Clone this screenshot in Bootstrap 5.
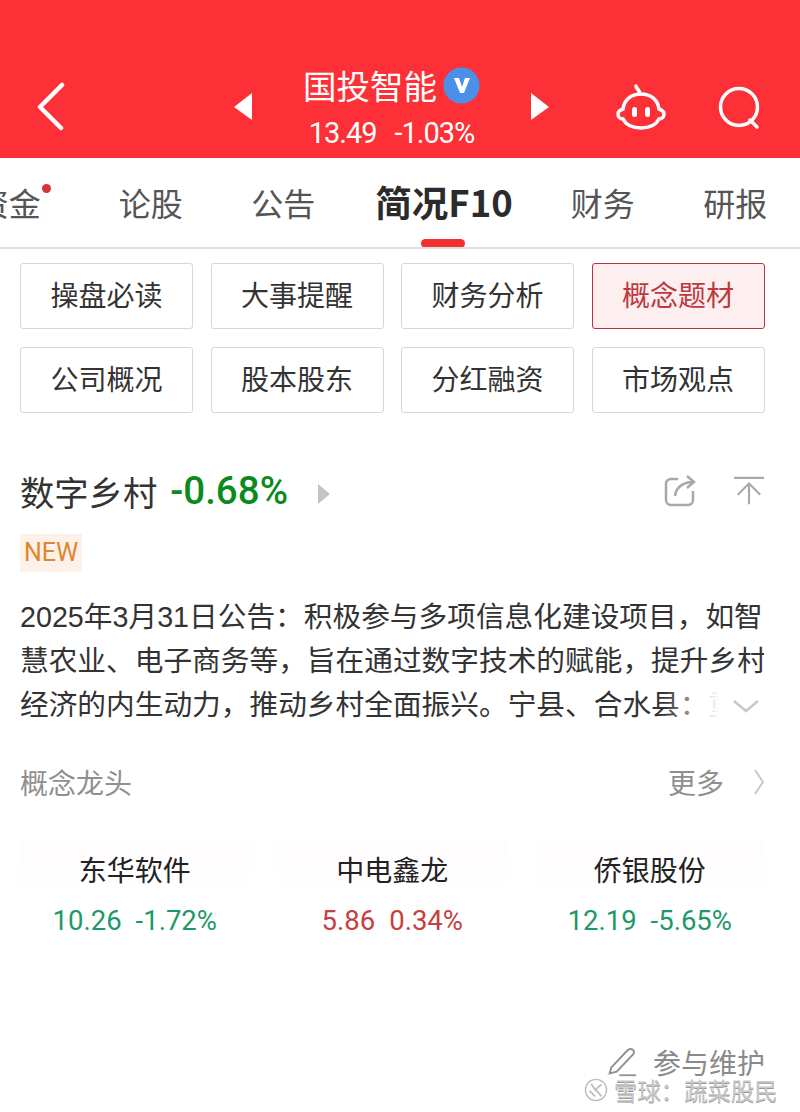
<!DOCTYPE html>
<html lang="zh">
<head>
<meta charset="utf-8">
<title>国投智能</title>
<link href="https://cdn.jsdelivr.net/npm/bootstrap@5.3.0/dist/css/bootstrap.min.css" rel="stylesheet">
<style>
html,body{width:800px;height:1112px;overflow:hidden;background:#fff}
body{font-family:"Noto Sans CJK SC","Liberation Sans",sans-serif;color:#333;position:relative}
.hdr{height:158px;background:#fd2f37;color:#fff;padding-top:63px}
.hdr-back{margin-left:36px;width:30px;height:50px;margin-top:18px}
.hdr-arrow{width:20px;height:30px;margin-top:29px}
.hdr-arrow-l{margin-left:167px}
.hdr-center{width:277px}
.hdr-title{font-size:33.5px;line-height:44px;gap:6px;height:44px}
.hdr-sub{font-family:Roboto,sans-serif;font-size:29px;line-height:30px;letter-spacing:-1px;margin-top:11px;gap:18px;color:#fff}
.hdr-robot{margin-left:65px;width:52px;height:50px;margin-top:18px}
.hdr-search{margin-left:50px;width:46px;height:46px;margin-top:23px}
.tabs-clip{height:91px;border-bottom:2px solid #dedede;overflow:hidden;position:relative}
.tabs{margin-left:-48px;width:900px;padding-top:21px}
.tab-item{width:132.5px;font-size:32px;line-height:46px;color:#555;text-align:center;position:relative}
.tab-item-first{padding-right:19px}
.tab-dot{position:absolute;left:90px;top:5px;width:9px;height:9px;border-radius:50%;background:#d9323a}
.tab-on{width:187px;font-size:36.500px;font-weight:700;color:#2b2b2b;padding-left:2px}
.tab-bar{position:absolute;left:421px;bottom:-1px;width:44px;height:9px;border-radius:5px;background:#f0312f}
.sub-grid{display:grid;grid-template-columns:repeat(4,173px);column-gap:17.500px;row-gap:18px;padding:14px 0 0 20px}
.sub-btn{height:66px;border:1.5px solid #d6d6d6;border-radius:3px;background:#fff;font-size:28px;line-height:1;color:#333;padding:0 0 4px}
.sub-on{background:#fdeeef;border-color:#b8323c;color:#bd383f}
.concept{padding:53px 36px 2px 20px}
.concept-name{font-size:34.3px;line-height:50px}
.concept-pct{font-family:Roboto,"Liberation Sans",sans-serif;font-size:38.500px;font-weight:500;color:#0b8a1e;margin-left:13px;line-height:50px}
.concept-more{margin-left:29px;width:14px;height:22px;margin-top:6px}
.tool-a{width:32px;height:32px;margin-right:38px}
.tool-b{width:30px;height:32px}
.tag-new{display:inline-block;background:#fdf1ea;color:#e0862f;font-family:Roboto,"Liberation Sans",sans-serif;font-size:25px;line-height:38px;padding:0 4px;margin:16px 0 0 20px}
.desc-wrap{position:relative;margin:23px 36px 0 20px;height:132px;overflow:hidden}
.desc{font-family:"Liberation Sans","Noto Sans CJK SC",sans-serif;font-size:28.7px;line-height:44px;color:#333;width:746px;margin:0}
.desc-fade{position:absolute;right:0;bottom:0;width:100px;height:44px;background:linear-gradient(90deg,rgba(255,255,255,0),#fff 55%)}
.desc-chev{position:absolute;right:4px;bottom:14px;width:28px;height:14px}
.lead-head{padding:33px 36px 0 20px;font-size:28px;line-height:44px;color:#8f8f8f}
.lead-chev{width:10px;height:26px;margin-left:30px}
.lead-row{margin:37px 22px 0 6px;display:grid;grid-template-columns:repeat(3,257.5px)}
.lead-cell{text-align:center}
.lead-name{font-size:28px;line-height:40px;color:#222;padding-top:8px;margin:0 14px;background:linear-gradient(#fffcfd,#fffdfe 70%,#fff)}
.lead-val{font-family:Roboto,"Liberation Sans",sans-serif;font-size:27.5px;line-height:36px;margin-top:14px}
.lead-val span+span{margin-left:14px}
.val-green{color:#1c9a66}.val-red{color:#c5403f}
.maint{position:absolute;right:35px;top:1047px;font-size:28px;line-height:30px;color:#8a8a8a;gap:14px}
.maint svg{width:34px;height:30px}
.wm{position:absolute;left:584px;top:1078px;gap:6px;font-size:23.4px;line-height:21px;color:#c9c9c9;text-shadow:0 1px 0 #999,0 -1px 0 #fff}
.wm svg{width:24px;height:24px}
</style>
</head>
<body>
<header class="hdr d-flex align-items-start">
  <svg class="hdr-back" viewBox="0 0 30 50"><path d="M26 4 4 26l21 21" fill="none" stroke="#fff" stroke-width="4.500" stroke-linecap="round" stroke-linejoin="round"/></svg>
  <svg class="hdr-arrow hdr-arrow-l" viewBox="0 0 20 30"><path d="M19 1v27L1 15z" fill="#fff"/></svg>
  <div class="hdr-center text-center">
    <div class="hdr-title d-flex justify-content-center align-items-center">
      <span>国投智能</span>
      <svg width="37" height="37" viewBox="0 0 37 37"><circle cx="18.500" cy="18.500" r="18" fill="#4a90e8"/><path d="M11 11h5l3 9 3-9h5l-6 15h-4z" fill="#fff"/></svg>
    </div>
    <div class="hdr-sub d-flex justify-content-center"><span>13.49</span><span>-1.03%</span></div>
  </div>
  <svg class="hdr-arrow" viewBox="0 0 20 30"><path d="M1 1v27l18-13z" fill="#fff"/></svg>
  <svg class="hdr-robot" viewBox="0 0 52 50"><path d="M25 13c0-4-3-4-4-8" fill="none" stroke="#fff" stroke-width="3.500" stroke-linecap="round"/><path d="M26 13c-10 0-17 6-18 15-3 1-5 3-5 5 0 3 2 5 5 5 3 6 10 9 18 9s15-3 18-9c3 0 5-2 5-5 0-2-2-4-5-5-1-9-8-15-18-15z" fill="none" stroke="#fff" stroke-width="3.500"/><rect x="17" y="26" width="5" height="10" rx="2.500" fill="#fff"/><rect x="30" y="26" width="5" height="10" rx="2.500" fill="#fff"/></svg>
  <svg class="hdr-search" viewBox="0 0 46 46"><circle cx="22" cy="21" r="18.500" fill="none" stroke="#fff" stroke-width="3.500"/><path d="m33 34 7 7" stroke="#fff" stroke-width="3.500" stroke-linecap="round"/></svg>
</header>

<nav class="tabs-clip">
  <div class="tabs d-flex">
    <div class="tab-item tab-item-first">资金<i class="tab-dot"></i></div>
    <div class="tab-item">论股</div>
    <div class="tab-item">公告</div>
    <div class="tab-item tab-on">简况F10</div>
    <div class="tab-item">财务</div>
    <div class="tab-item">研报</div>
  </div>
  <i class="tab-bar"></i>
</nav>

<div class="sub-grid">
  <button class="btn sub-btn" type="button">操盘必读</button>
  <button class="btn sub-btn" type="button">大事提醒</button>
  <button class="btn sub-btn" type="button">财务分析</button>
  <button class="btn sub-btn sub-on" type="button">概念题材</button>
  <button class="btn sub-btn" type="button">公司概况</button>
  <button class="btn sub-btn" type="button">股本股东</button>
  <button class="btn sub-btn" type="button">分红融资</button>
  <button class="btn sub-btn" type="button">市场观点</button>
</div>

<div class="concept d-flex align-items-center">
  <span class="concept-name">数字乡村</span>
  <span class="concept-pct">-0.68%</span>
  <svg class="concept-more" viewBox="0 0 14 22"><path d="M1 1 13 11 1 21z" fill="#c4c4c4"/></svg>
  <div class="ms-auto d-flex">
    <svg class="tool-a" viewBox="0 0 32 32"><path d="M14 4H7a5 5 0 0 0-5 5v16a5 5 0 0 0 5 5h17a5 5 0 0 0 5-5v-9" fill="none" stroke="#a8a8a8" stroke-width="2.500"/><path d="M11 21c1-8 6-13 17-14M23 1l7 6-7 6" fill="none" stroke="#a8a8a8" stroke-width="2.500"/></svg>
    <svg class="tool-b" viewBox="0 0 32 32"><path d="M0 2h32M16 30V8M4 20 16 8l12 12" fill="none" stroke="#a8a8a8" stroke-width="2.200"/></svg>
  </div>
</div>

<span class="tag-new">NEW</span>

<div class="desc-wrap">
  <p class="desc">2025年3月31日公告：积极参与多项信息化建设项目，如智慧农业、电子商务等，旨在通过数字技术的赋能，提升乡村经济的内生动力，推动乡村全面振兴。宁县、合水县：重点</p>
  <i class="desc-fade"></i>
  <svg class="desc-chev" viewBox="0 0 28 14"><path d="m2 2 12 10L26 2" fill="none" stroke="#c8c8c8" stroke-width="2.500"/></svg>
</div>

<div class="lead-head d-flex align-items-center">
  <span>概念龙头</span>
  <span class="ms-auto">更多</span>
  <svg class="lead-chev" viewBox="0 0 10 26"><path d="m1 1 8 12-8 12" fill="none" stroke="#c8c8c8" stroke-width="2"/></svg>
</div>

<div class="lead-row">
  <div class="lead-cell"><div class="lead-name">东华软件</div><div class="lead-val val-green"><span>10.26</span><span>-1.72%</span></div></div>
  <div class="lead-cell"><div class="lead-name">中电鑫龙</div><div class="lead-val val-red"><span>5.86</span><span>0.34%</span></div></div>
  <div class="lead-cell"><div class="lead-name">侨银股份</div><div class="lead-val val-green"><span>12.19</span><span>-5.65%</span></div></div>
</div>

<div class="maint d-flex align-items-center">
  <svg viewBox="0 0 34 34"><path d="M5 23 23 4c2-2 4-2 6-1s2 4 0 6L11 28l-8 2z" fill="none" stroke="#8f8f8f" stroke-width="2.200"/><path d="M14 32h19" stroke="#8f8f8f" stroke-width="2"/></svg>
  <span>参与维护</span>
</div>
<div class="wm d-flex align-items-center">
  <svg viewBox="0 0 26 26"><circle cx="13" cy="13" r="11.500" fill="#fff" stroke="#bdbdbd" stroke-width="1.500"/><path d="M8 6c2 5 6 8 11 14M19 7c-3 2-6 5-7 7M6 14l6 6" fill="none" stroke="#bdbdbd" stroke-width="2"/></svg>
  <span>雪球：蔬菜股民</span>
</div>
<script src="https://cdn.jsdelivr.net/npm/bootstrap@5.3.0/dist/js/bootstrap.bundle.min.js"></script>
</body>
</html>
